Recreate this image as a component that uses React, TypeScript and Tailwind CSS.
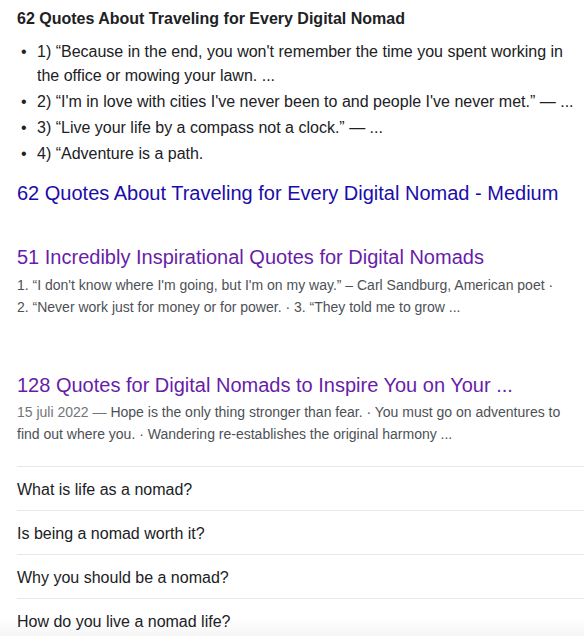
const bullets = [
  "1) “Because in the end, you won't remember the time you spent working in the office or mowing your lawn. ...",
  "2) “I'm in love with cities I've never been to and people I've never met.” — ...",
  "3) “Live your life by a compass not a clock.” — ...",
  "4) “Adventure is a path.",
];

const questions = [
  "What is life as a nomad?",
  "Is being a nomad worth it?",
  "Why you should be a nomad?",
  "How do you live a nomad life?",
];

export default function App() {
  return (
    <div className="relative h-[636px] w-[584px] overflow-hidden bg-white pl-[17px] font-['Liberation_Sans',Arial,sans-serif] text-[#202124]">
      {/* bottom fade, sits behind the text */}
      <div className="pointer-events-none absolute inset-x-0 bottom-0 h-[18px] bg-gradient-to-b from-white to-[#f6f6f6]" />

      <div className="relative">
        {/* Featured snippet */}
        <h2 className="pt-[7px] text-[16px] font-bold leading-6">
          62 Quotes About Traveling for Every Digital Nomad
        </h2>
        <ul className="mt-[9px] space-y-[2px] pr-[4px]">
          {bullets.map((b) => (
            <li key={b} className="flex text-[16px] leading-6">
              <span className="w-[20px] shrink-0 pl-[4px]">•</span>
              <span>{b}</span>
            </li>
          ))}
        </ul>
        <a className="mt-[14px] block text-[20px] leading-[26px] text-[#1a0dab]">
          62 Quotes About Traveling for Every Digital Nomad - Medium
        </a>

        {/* Result 1 */}
        <a className="mt-[38px] block text-[20px] leading-[26px] text-[#681da8]">
          51 Incredibly Inspirational Quotes for Digital Nomads
        </a>
        <p className="mt-[4px] pr-3 text-[14px] leading-[22px] text-[#4d5156]">
          1. “I don't know where I'm going, but I'm on my way.” – Carl Sandburg, American poet ·
          <br />
          2. “Never work just for money or for power. · 3. “They told me to grow ...
        </p>

        {/* Result 2 */}
        <a className="mt-[54px] block text-[20px] leading-[26px] text-[#681da8]">
          128 Quotes for Digital Nomads to Inspire You on Your ...
        </a>
        <p className="mt-[3px] pr-3 text-[14px] leading-[22px] text-[#4d5156]">
          <span className="text-[#70757a]">15 juli 2022 — </span>
          Hope is the only thing stronger than fear. · You must go on adventures to find out where you. · Wandering re-establishes the original harmony ...
        </p>

        {/* People also ask */}
        <div className="mt-[21px]">
          {questions.map((q) => (
            <div key={q} className="flex h-[44px] items-center border-t border-[#e8e8e8] pt-[2px] text-[16px]">
              {q}
            </div>
          ))}
        </div>
      </div>
    </div>
  );
}
